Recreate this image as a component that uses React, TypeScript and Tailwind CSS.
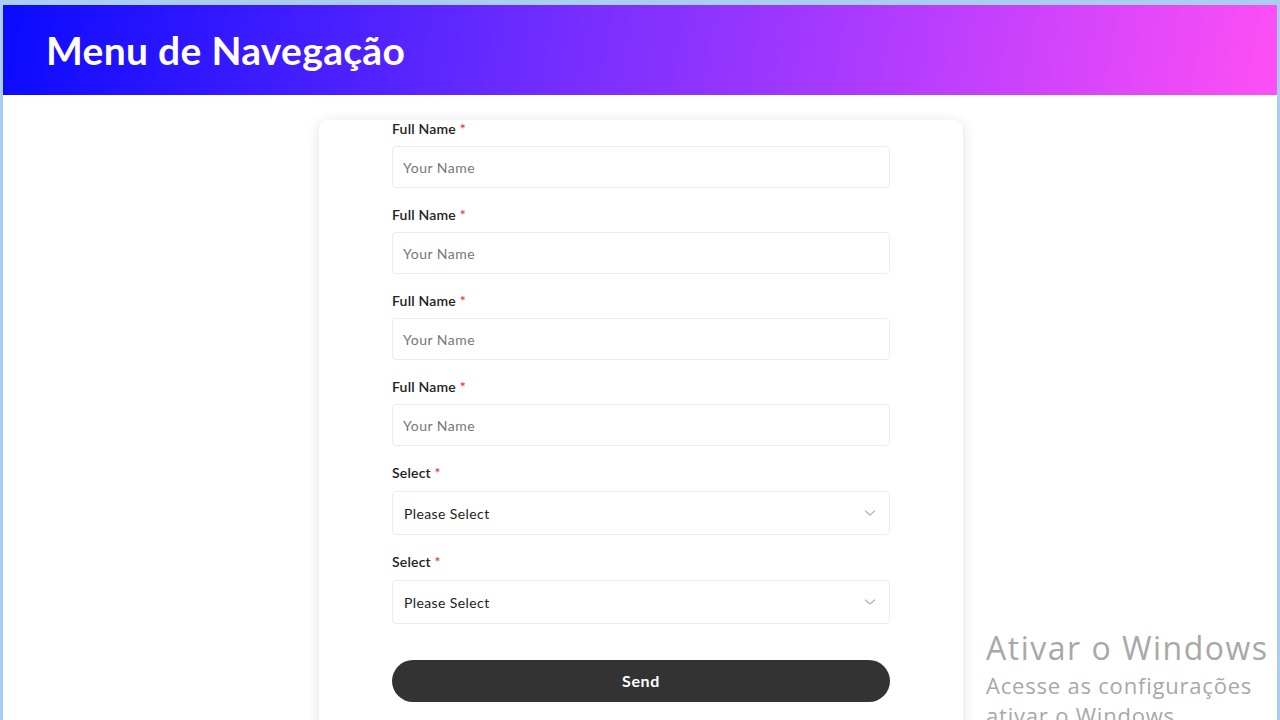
import React from 'react';

const fields = [
  { label: 'Full Name', kind: 'input' },
  { label: 'Full Name', kind: 'input' },
  { label: 'Full Name', kind: 'input' },
  { label: 'Full Name', kind: 'input' },
  { label: 'Select', kind: 'select' },
  { label: 'Select', kind: 'select' },
];

const Chevron: React.FC = () => (
  <svg width="12" height="8" viewBox="0 0 12 8" fill="none">
    <path d="M1.5 2l4.5 4 4.5-4" stroke="#b5b5b5" strokeWidth="1.3" strokeLinecap="round" strokeLinejoin="round" />
  </svg>
);

const App: React.FC = () => {
  return (
    <div className="relative h-[720px] w-[1280px] overflow-hidden bg-[#a9cdf3] pt-[5px] pl-[3px] pr-[3px] font-['Lato',sans-serif]">
      <div className="flex h-full flex-col bg-white">
        {/* Header */}
        <header className="flex h-[90px] shrink-0 items-center bg-[linear-gradient(100deg,#0a0aff_0%,#6a2bff_40%,#b33cff_70%,#ff4ff5_100%)] pl-[43px]">
          <h1 className="text-[39px] font-bold tracking-[0.3px] text-white">Menu de Navegação</h1>
        </header>

        {/* Form card */}
        <div className="flex shrink-0 justify-center pt-[25px] pl-[2px]">
          <div className="h-[700px] w-[644px] rounded-[10px] bg-white shadow-[0_2px_14px_rgba(0,0,0,0.12)]">
            <form className="mx-auto flex w-[498px] flex-col">
              {fields.map((f, i) => (
                <div key={i} className="mb-[18px]">
                  <label className="block text-[14px] leading-[17px] font-semibold tracking-[0.2px] text-[#222]">
                    {f.label} <span className="text-[#e53935]">*</span>
                  </label>
                  {f.kind === 'input' ? (
                    <div className="mt-[9px] flex h-[42px] items-center rounded-[4px] border border-[#ececec] px-[10px] text-[14px] tracking-[0.5px] text-[#777]">
                      Your Name
                    </div>
                  ) : (
                    <div className="mt-[10px] flex h-[44px] items-center justify-between rounded-[4px] border border-[#ececec] pl-[11px] pr-[13px] text-[14px] tracking-[0.4px] text-[#222]">
                      <span>Please Select</span>
                      <Chevron />
                    </div>
                  )}
                </div>
              ))}
              <button
                type="button"
                className="mt-[18px] h-[42px] w-full rounded-full bg-[#333333] text-[16px] font-bold tracking-[0.6px] text-white"
              >
                Send
              </button>
            </form>
          </div>
        </div>
      </div>

      {/* Windows activation watermark */}
      <div className="pointer-events-none absolute left-[986px] top-[626px] whitespace-nowrap font-['Open_Sans',sans-serif] text-[#a8a8a8]">
        <div className="text-[32px] leading-[44px] tracking-[1.5px]">Ativar o Windows</div>
        <div className="text-[22px] leading-[30px] tracking-[0.8px]">Acesse as configurações</div>
        <div className="text-[22px] leading-[30px] tracking-[0.8px]">ativar o Windows.</div>
      </div>
    </div>
  );
};

export default App;
